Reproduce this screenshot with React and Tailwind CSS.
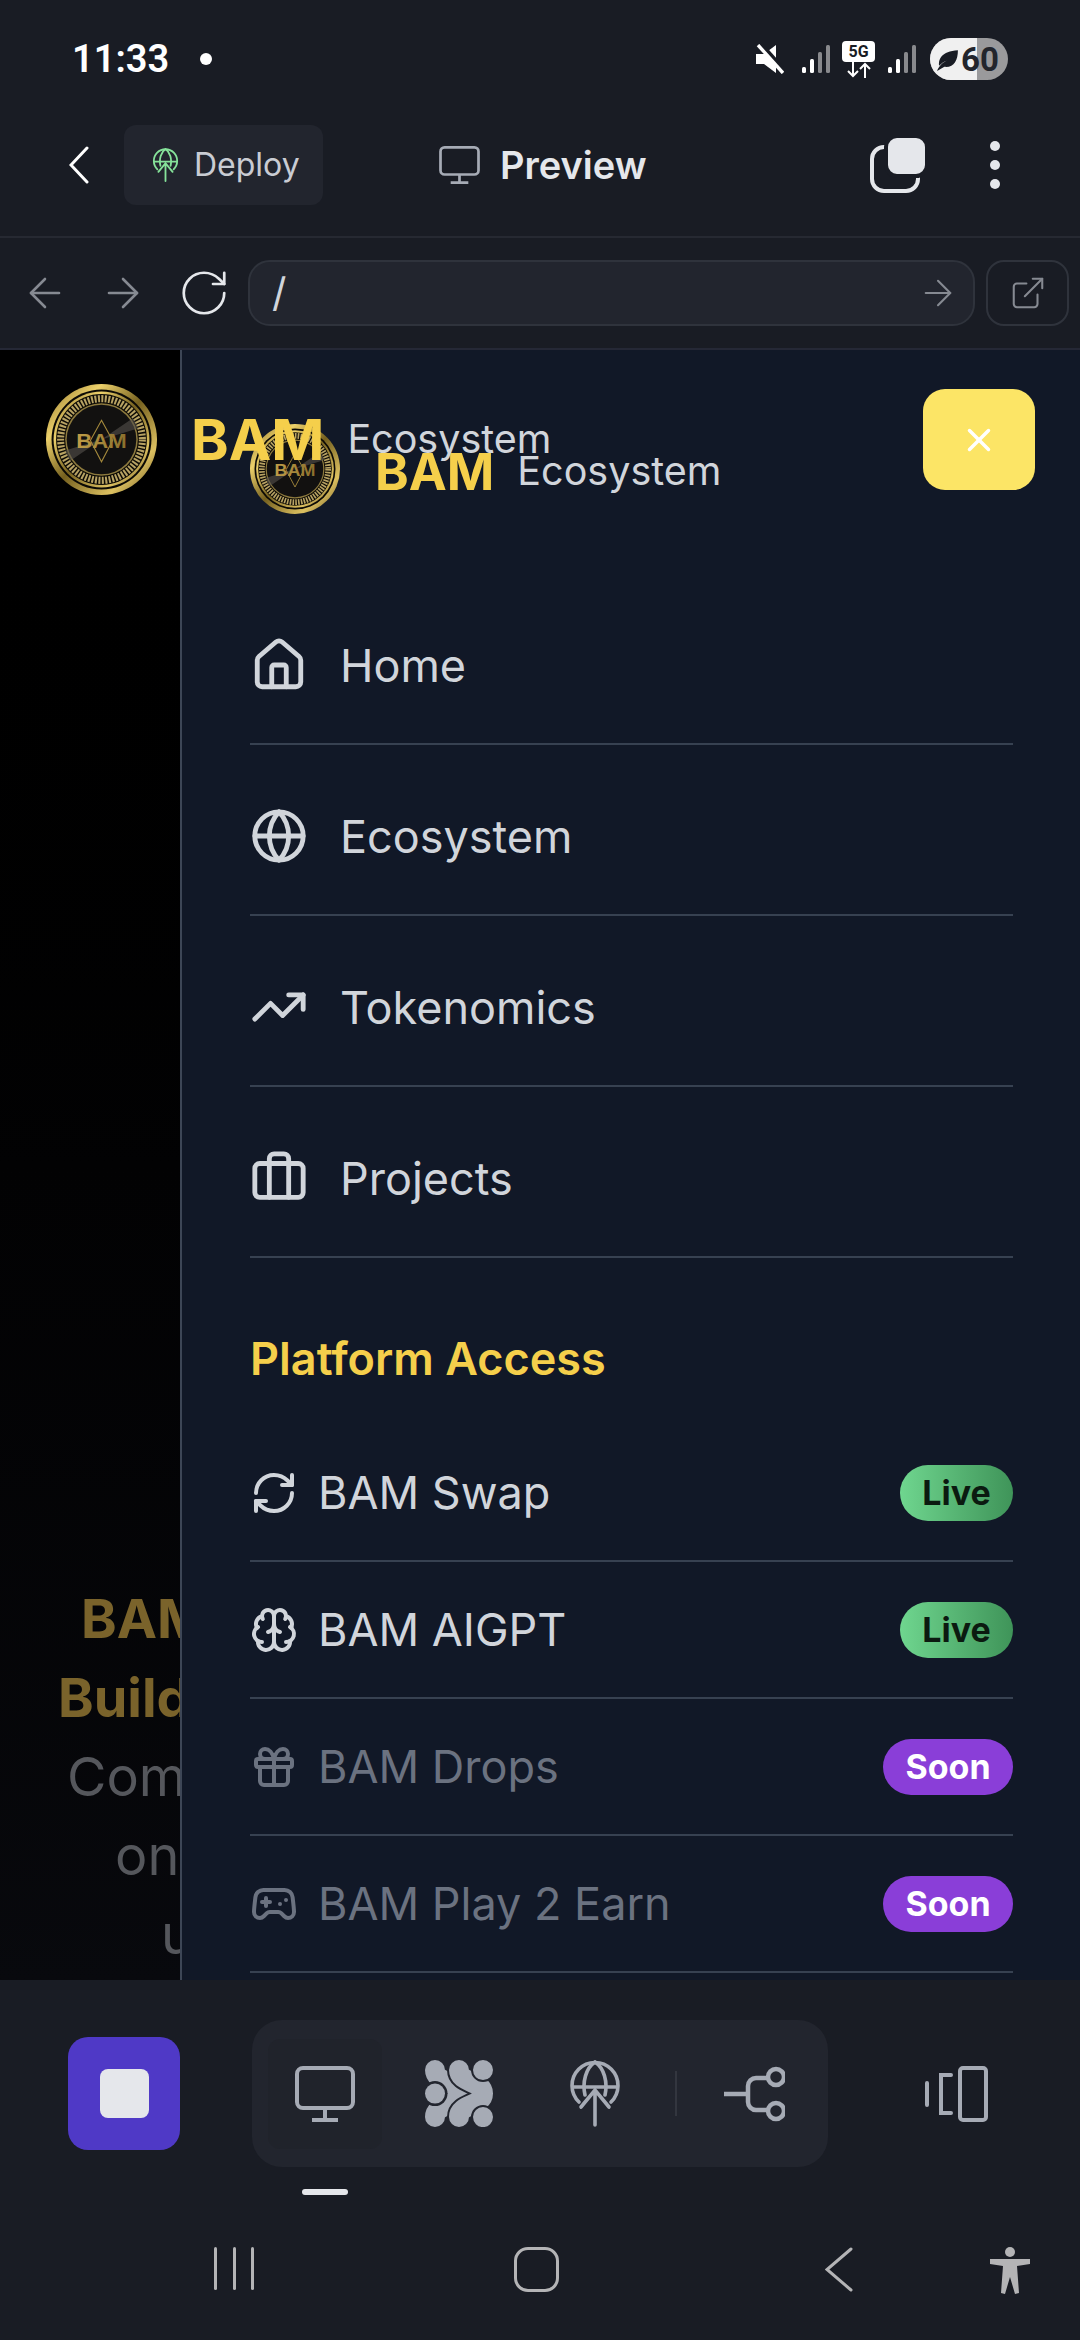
import { useId } from 'react';
import { Home, Globe, TrendingUp, Briefcase, RefreshCw, Brain, Gift, Gamepad2, ArrowLeft, ArrowRight, RotateCw, ExternalLink, X } from 'lucide-react';

const NAV = [
  { label: 'Home', Icon: Home },
  { label: 'Ecosystem', Icon: Globe },
  { label: 'Tokenomics', Icon: TrendingUp },
  { label: 'Projects', Icon: Briefcase },
];

const PLATFORM = [
  { label: 'BAM Swap', Icon: RefreshCw, badge: 'Live' },
  { label: 'BAM AIGPT', Icon: Brain, badge: 'Live' },
  { label: 'BAM Drops', Icon: Gift, badge: 'Soon', off: true },
  { label: 'BAM Play 2 Earn', Icon: Gamepad2, badge: 'Soon', off: true },
];

const HERO = [
  { text: 'BAM', cls: 'pl-[81px] font-bold text-[#7a632b]' },
  { text: 'Build', cls: 'pl-[58px] font-bold text-[#7a632b]' },
  { text: 'Com', cls: 'pl-[67px] text-[#55575c]' },
  { text: 'on', cls: 'pl-[115px] text-[#55575c]' },
  { text: 'u', cls: 'pl-[161px] text-[#55575c]' },
];

function Coin({ className }) {
  const id = useId();
  return (
    <svg viewBox="0 0 110 110" className={className}>
      <defs>
        <linearGradient id={id + 'g'} x1="0" y1="0" x2="1" y2="1">
          <stop offset="0" stopColor="#8a7029" />
          <stop offset="0.25" stopColor="#ecd06a" />
          <stop offset="0.5" stopColor="#75601f" />
          <stop offset="0.78" stopColor="#dcc060" />
          <stop offset="1" stopColor="#6a5420" />
        </linearGradient>
        <linearGradient id={id + 't'} x1="0" y1="0" x2="1" y2="0">
          <stop offset="0" stopColor="#c09e48" />
          <stop offset="1" stopColor="#8a6f2c" />
        </linearGradient>
      </defs>
      <circle cx="55" cy="55" r="55" fill={`url(#${id}g)`} />
      <circle cx="55" cy="55" r="49.5" fill="#0c0a05" />
      <circle cx="55" cy="55" r="47.5" fill={`url(#${id}g)`} />
      <circle cx="55" cy="55" r="45" fill="#0c0a05" />
      <circle cx="55" cy="55" r="40.5" fill="none" stroke="#b7a263" strokeWidth="7" strokeDasharray="2 1.4" />
      <circle cx="55" cy="55" r="36" fill="#8d7a3e" />
      <circle cx="55" cy="55" r="34.5" fill="#121110" />
      <path d="M55 55 L86 34 A38 38 0 0 1 91 44 Z M55 55 L24 76 A38 38 0 0 1 19 66 Z" fill="#55524c" opacity="0.6" />
      <path d="M55 36 L66 56 L55 77 L44 56 Z" fill="none" stroke="#a58a3c" strokeWidth="1.1" />
      <text x="55" y="63" textAnchor="middle" fontFamily="Liberation Sans, sans-serif" fontSize="20" fontWeight="700" fill={`url(#${id}t)`} textLength="50" lengthAdjust="spacingAndGlyphs">BAM</text>
    </svg>
  );
}

function Signal({ className }) {
  return (
    <svg viewBox="0 0 28 30" className={className}>
      <rect x="0" y="23" width="4" height="6" rx="1.5" fill="#fff" />
      <rect x="8" y="15" width="4" height="14" rx="1.5" fill="#fff" />
      <rect x="16" y="8" width="4" height="21" rx="1.5" fill="#88898d" />
      <rect x="24" y="1" width="4" height="28" rx="1.5" fill="#88898d" />
    </svg>
  );
}

function StatusIcons() {
  return (
    <div className="flex items-center">
      <svg viewBox="0 0 28 30" className="w-[28px] h-[30px]">
        <path d="M0 10h8L20 1v28L8 20H0z" fill="#fff" />
        <path d="M6 1l25 28" stroke="#191c24" strokeWidth="4" />
        <path d="M2 1l25 28" stroke="#fff" strokeWidth="3.4" />
      </svg>
      <Signal className="w-[28px] h-[30px] ml-[18px]" />
      <div className="ml-[12px] flex flex-col items-center">
        <span className="w-[33px] h-[21px] bg-white rounded-[4px] text-[#191c24] text-[16px] font-bold leading-[21px] text-center font-[Roboto,sans-serif]">5G</span>
        <svg viewBox="0 0 26 16" className="w-[26px] h-[16px]">
          <path d="M7 0v14M2 9l5 5 5-5M19 16V2M14 7l5-5 5 5" fill="none" stroke="#fff" strokeWidth="2" />
        </svg>
      </div>
      <Signal className="w-[28px] h-[30px] ml-[13px]" />
      <div className="relative ml-[14px] w-[78px] h-[42px] rounded-full overflow-hidden bg-[#9a9a9c] flex items-center">
        <div className="absolute left-0 top-0 bottom-0 w-[47px] bg-[#f0f0f0]" />
        <svg viewBox="0 0 24 24" className="relative w-[25px] h-[25px] ml-[5px]">
          <path d="M2 23c2-5 5-8 10-10-4 1-6 3-8 5-1-6 2-14 18-15 0 10-4 17-13 16" fill="#191c24" />
        </svg>
        <span className="relative ml-[1px] text-[33px] font-bold leading-none text-[#22252c] font-[Roboto,sans-serif]">60</span>
      </div>
    </div>
  );
}

function MonitorIcon({ className }) {
  return (
    <svg viewBox="0 0 60 56" fill="none" stroke="currentColor" strokeWidth="4" className={className}>
      <rect x="2" y="2" width="56" height="40" rx="6" />
      <path d="M30 42v11M17 54h26" />
    </svg>
  );
}

function GlobeUp({ className }) {
  return (
    <svg viewBox="0 0 50 67" fill="none" stroke="currentColor" strokeWidth="3.6" strokeLinecap="round" className={className}>
      <path d="M9 42A23 23 0 1 1 41 42" />
      <path d="M15 35C12 22 16 8 25 2C34 8 38 22 35 35" />
      <path d="M3 27H47" />
      <path d="M25 65V30M11 47L25 30L39 47" />
    </svg>
  );
}

function CopyIcon() {
  return (
    <svg viewBox="0 0 55 55" className="w-[55px] h-[55px]">
      <rect x="2" y="9" width="46" height="44" rx="12" fill="none" stroke="#e5e7eb" strokeWidth="4" />
      <rect x="16" y="-2" width="41" height="40" rx="11" fill="#e5e7eb" stroke="#191c24" strokeWidth="4" />
    </svg>
  );
}

// dark halos under each piece keep the gaps between the blobs
function BlobIcon() {
  const left = 'M10 10C10 23 34 21 34 33.5C34 46 10 44 10 57';
  const right = 'M34 10C34 23 58 21 58 33.5C58 46 34 44 34 57';
  return (
    <svg viewBox="0 0 69 67" fill="none" strokeLinecap="round" className="w-[69px] h-[67px]">
      <path d={left} stroke="#a6abb5" strokeWidth="20" />
      <path d="M10 33.5v.1" stroke="#22252e" strokeWidth="25" />
      <path d="M10 33.5v.1" stroke="#a6abb5" strokeWidth="20" />
      <path d={right} stroke="#22252e" strokeWidth="24" />
      <path d={right} stroke="#a6abb5" strokeWidth="20" />
      <path d="M58 10v.1M58 57v.1" stroke="#22252e" strokeWidth="24" />
      <path d="M58 10v.1M58 57v.1" stroke="#a6abb5" strokeWidth="20" />
    </svg>
  );
}

function BranchIcon() {
  return (
    <svg viewBox="0 0 61 56" fill="none" stroke="#a6abb5" strokeWidth="4.5" className="w-[61px] h-[56px]">
      <path d="M0 28H24M48 12H32a8 8 0 0 0-8 8V36a8 8 0 0 0 8 8H48" />
      <circle cx="52" cy="11" r="8" fill="#22252e" />
      <circle cx="52" cy="45" r="8" fill="#22252e" />
    </svg>
  );
}

function DeviceIcon() {
  return (
    <svg viewBox="0 0 63 56" fill="none" stroke="#a6abb5" strokeWidth="4" strokeLinecap="round" className="w-[63px] h-[56px]">
      <rect x="35" y="2" width="26" height="52" rx="3" />
      <path d="M26 9H16V47H26M2 17V39" />
    </svg>
  );
}

function Row({ item }) {
  const { Icon, label, badge, off } = item;
  return (
    <div className={`h-[137px] flex items-center border-b-2 border-[#374151] ${off ? 'text-[#6b7280]' : 'text-[#d1d5db]'}`}>
      <Icon className="w-[48px] h-[48px] shrink-0" strokeWidth={2} />
      <span className="ml-[20px] text-[45px] leading-none">{label}</span>
      <span className={`ml-auto h-[56px] rounded-full flex items-center justify-center text-[34px] font-bold ${badge === 'Live' ? 'w-[113px] bg-gradient-to-r from-[#6fd68f] to-[#3f9459] text-[#0b1a10]' : 'w-[130px] bg-[#8a3ed8] text-white'}`}>
        {badge}
      </span>
    </div>
  );
}

export default function App() {
  return (
    <div className="w-[1080px] h-[2340px] bg-[#191c24] flex flex-col overflow-hidden font-[Inter,sans-serif]">
      {/* status bar */}
      <div className="h-[100px] shrink-0 flex items-start justify-between pl-[72px] pr-[72px] pt-[38px]">
        <div className="flex items-center h-[42px]">
          <span className="text-[38px] font-semibold text-white leading-none font-[Roboto,sans-serif]">11:33</span>
          <span className="ml-[31px] w-[12px] h-[12px] rounded-full bg-white" />
        </div>
        <StatusIcons />
      </div>

      {/* app header */}
      <div className="h-[138px] shrink-0 border-b-2 border-[#262932] flex items-center pl-[69px] pr-[80px] pb-[6px]">
        <svg viewBox="0 0 20 38" fill="none" stroke="#fff" strokeWidth="3" strokeLinecap="round" className="w-[20px] h-[38px]">
          <path d="M18 2L2 19L18 36" />
        </svg>
        <div className="ml-[35px] w-[199px] h-[80px] bg-[#22252e] rounded-[12px] flex items-center pl-[28px]">
          <GlobeUp className="w-[27px] h-[34px] text-[#86e39a]" />
          <span className="ml-[15px] text-[32px] text-[#c9ccd3]">Deploy</span>
        </div>
        <MonitorIcon className="ml-[116px] w-[41px] h-[38px] text-[#a6abb5]" />
        <span className="ml-[20px] text-[38px] font-semibold text-[#e5e7eb]">Preview</span>
        <div className="ml-auto flex items-center">
          <CopyIcon />
          <div className="ml-[65px] flex flex-col gap-[9px]">
            <span className="w-[10px] h-[10px] rounded-full bg-[#e5e7eb]" />
            <span className="w-[10px] h-[10px] rounded-full bg-[#e5e7eb]" />
            <span className="w-[10px] h-[10px] rounded-full bg-[#e5e7eb]" />
          </div>
        </div>
      </div>

      {/* url bar */}
      <div className="h-[112px] shrink-0 border-b-2 border-[#252836] flex items-center pl-[21px] pr-[11px]">
        <ArrowLeft className="w-[48px] h-[48px] text-[#868a92]" strokeWidth={1.3} />
        <ArrowRight className="ml-[30px] w-[48px] h-[48px] text-[#868a92]" strokeWidth={1.3} />
        <RotateCw className="ml-[30px] w-[54px] h-[54px] text-[#e5e7eb]" strokeWidth={1.2} />
        <div className="ml-[17px] flex-1 h-[66px] bg-[#22252e] border-2 border-[#2f333c] rounded-[22px] flex items-center pl-[22px] pr-[14px]">
          <span className="text-[40px] text-[#d1d5db] leading-none">/</span>
          <ArrowRight className="ml-auto w-[42px] h-[42px] text-[#868a92]" strokeWidth={1.2} />
        </div>
        <div className="ml-[11px] w-[83px] h-[66px] border-2 border-[#2f333c] rounded-[18px] flex items-center justify-center">
          <ExternalLink className="w-[38px] h-[38px] text-[#868a92]" strokeWidth={1.3} />
        </div>
      </div>

      {/* page */}
      <div className="relative h-[1630px] shrink-0 flex overflow-hidden">
        <div className="w-[180px] shrink-0 bg-gradient-to-b from-[#000000] via-[#020203] to-[#08090d] overflow-hidden pt-[1229px]">
          {HERO.map(line => (
            <div key={line.text} className={`h-[79px] flex items-center whitespace-nowrap text-[54px] leading-none ${line.cls}`}>
              {line.text}
            </div>
          ))}
        </div>

        <div className="flex-1 border-l-2 border-[#3d4656] bg-[#111827] pl-[68px] pr-[67px] pt-[74px]">
          <div className="flex items-center h-[90px]">
            <Coin className="w-[90px] h-[90px]" />
            <span className="ml-[35px] mt-[5px] text-[51px] font-bold text-[#f5cf4b] leading-none">BAM</span>
            <span className="ml-[23px] mt-[5px] text-[39.5px] text-[#d1d5db] leading-none">Ecosystem</span>
          </div>
          <div className="mt-[60px]">
            {NAV.map(({ label, Icon }) => (
              <div key={label} className="h-[171px] pt-[13px] flex items-center border-b-2 border-[#374151] text-[#d1d5db]">
                <Icon className="w-[58px] h-[58px] shrink-0" strokeWidth={2} />
                <span className="ml-[32px] text-[45px] leading-none">{label}</span>
              </div>
            ))}
          </div>
          <div className="h-[167px] pt-[34px] flex items-center text-[45px] font-semibold text-[#f5cf4b]">Platform Access</div>
          {PLATFORM.map(item => <Row key={item.label} item={item} />)}
        </div>

        {/* header of the page behind, painted over the drawer */}
        <div className="absolute left-[46px] top-[34px] flex items-center">
          <Coin className="w-[111px] h-[111px]" />
          <span className="ml-[34px] text-[57px] font-bold text-[#f5cf4b] leading-none">BAM</span>
          <span className="ml-[23px] text-[39.5px] text-[#d1d5db] leading-none">Ecosystem</span>
        </div>
        <div className="absolute left-[923px] top-[39px] w-[112px] h-[101px] rounded-[22px] bg-[#fce566] flex items-center justify-center">
          <X className="w-[38px] h-[38px] text-white" strokeWidth={2.2} />
        </div>
      </div>

      {/* bottom toolbar */}
      <div className="h-[360px] shrink-0 relative">
        <div className="flex items-start pl-[68px] pt-[40px]">
          <div className="mt-[17px] w-[112px] h-[113px] rounded-[20px] bg-[#4f39c6] flex items-center justify-center">
            <div className="w-[49px] h-[49px] rounded-[8px] bg-[#e5e7eb]" />
          </div>
          <div className="ml-[72px] w-[576px] h-[147px] rounded-[30px] bg-[#22252e] flex items-center pl-[16px]">
            <div className="w-[114px] h-[110px] rounded-[12px] bg-[#20232b] flex items-center justify-center">
              <MonitorIcon className="w-[60px] h-[56px] text-[#a6abb5]" />
            </div>
            <div className="ml-[43px]"><BlobIcon /></div>
            <GlobeUp className="ml-[76px] w-[50px] h-[67px] text-[#a6abb5]" />
            <div className="ml-[55px] w-[2px] h-[45px] bg-[#33363f]" />
            <div className="ml-[47px]"><BranchIcon /></div>
          </div>
          <div className="ml-[97px] mt-[46px]"><DeviceIcon /></div>
        </div>
        <div className="ml-[302px] mt-[22px] w-[46px] h-[6px] rounded-full bg-[#e5e7eb]" />

        <div className="mt-[52px] flex items-start h-[50px]">
          <div className="ml-[214px] w-[40px] h-[44px] flex justify-between">
            <span className="w-[3px] h-[43px] bg-[#b4b4b6] rounded-full" />
            <span className="w-[3px] h-[43px] bg-[#b4b4b6] rounded-full" />
            <span className="w-[3px] h-[43px] bg-[#b4b4b6] rounded-full" />
          </div>
          <div className="ml-[260px] w-[45px] h-[45px] border-[3px] border-[#b4b4b6] rounded-[14px]" />
          <svg viewBox="0 0 28 45" fill="none" stroke="#b4b4b6" strokeWidth="3" strokeLinecap="round" className="ml-[266px] w-[28px] h-[45px]">
            <path d="M26 2L2 22.5L26 43" />
          </svg>
          <svg viewBox="0 0 40 48" fill="#b4b4b6" className="ml-[137px] w-[40px] h-[48px]">
            <circle cx="20" cy="5" r="5" />
            <path d="M0 12H40V17L27 19L29 46L25 47L20 30L15 47L11 46L13 19L0 17Z" />
          </svg>
        </div>
      </div>
    </div>
  );
}
